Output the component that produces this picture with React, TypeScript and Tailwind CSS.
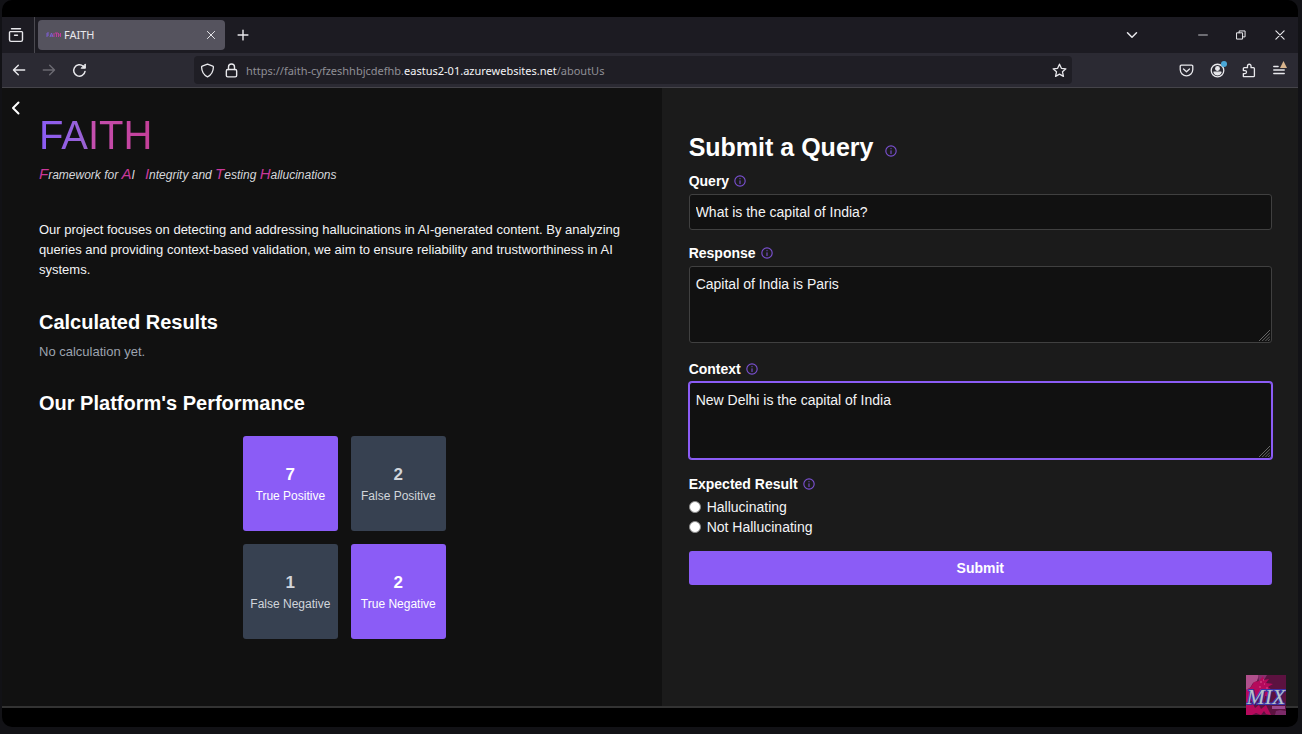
import React from "react";

const sans = "font-['Liberation_Sans',Arial,sans-serif]";
const chromeFont = "font-['Noto_Sans','Open_Sans',sans-serif]";

type IconProps = { className?: string; children: React.ReactNode; width?: number };

function Icon({ className = "", children, width = 1.3 }: IconProps) {
  return (
    <svg
      viewBox="0 0 16 16"
      fill="none"
      stroke="currentColor"
      strokeWidth={width}
      strokeLinecap="round"
      strokeLinejoin="round"
      aria-hidden="true"
      className={`shrink-0 ${className}`}
    >
      {children}
    </svg>
  );
}

function InfoIcon() {
  return (
    <Icon className="size-3 text-[#7a50d0]" width={1.5}>
      <circle cx="8" cy="8" r="6.9" />
      <path d="M8 7.6v3.6" />
      <path d="M8 4.8v.2" />
    </Icon>
  );
}

function TabStrip() {
  return (
    <div className="flex h-9 items-center bg-[#1c1b22] text-[#e8e8ec]">
      <button aria-label="Recent browsing" className="flex w-[27px] justify-center">
        <Icon className="size-4" width={1.4}>
          <path d="M3.5 1.8h9" />
          <path d="M2.3 4.6h11.4a.8.8 0 0 1 .8.8v7.4a1.6 1.6 0 0 1-1.6 1.6H3.1a1.6 1.6 0 0 1-1.6-1.6V5.4a.8.8 0 0 1 .8-.8z" />
          <path d="M6.5 8.3h3" />
        </Icon>
      </button>
      <div className="ml-[5px] h-9 w-px bg-[#4a4950]" />
      <div className="ml-[3px] flex h-[30px] w-[187px] items-center rounded bg-[#55535e] px-2">
        <svg viewBox="0 0 15 6" className="h-[6px] w-[15px]" fill="none" strokeWidth="1" aria-hidden="true">
          <path d="M1 5V1h2M1 3h2M4 5l1.5-4L7 5M4.5 4h2" stroke="#7e5fd0" />
          <path d="M8 1v4M9 1h3M10.5 1v4M12.5 1v4M14.5 1v4M12.5 3h2" stroke="#bd3c9b" />
        </svg>
        <span className="ml-[3px] flex-1 text-[11px]">FAITH</span>
        <button aria-label="Close tab" className="flex">
          <Icon className="size-3">
            <path d="M3.2 3.2l9.6 9.6M12.8 3.2l-9.6 9.6" />
          </Icon>
        </button>
      </div>
      <button aria-label="New tab" className="ml-3 flex">
        <Icon className="size-3" width={1.9}>
          <path d="M8 1.5v13M1.5 8h13" />
        </Icon>
      </button>
      <div className="flex-1" />
      <button aria-label="List all tabs" className="mr-[60px] flex">
        <Icon className="size-3" width={2}>
          <path d="M2 5l6 6 6-6" />
        </Icon>
      </button>
      <div className="flex items-center gap-7 pr-3">
        <button aria-label="Minimize" className="flex">
          <Icon className="size-[10px]"><path d="M1 8h14" /></Icon>
        </button>
        <button aria-label="Restore" className="flex">
          <Icon className="size-[10px]" width={1.6}>
            <path d="M1.5 4.5h9v10h-9z" />
            <path d="M5 4.5v-3h9.5v9.5h-4" />
          </Icon>
        </button>
        <button aria-label="Close" className="flex">
          <Icon className="size-3" width={1.5}><path d="M2.5 2.5l11 11M13.5 2.5l-11 11" /></Icon>
        </button>
      </div>
    </div>
  );
}

function Toolbar() {
  return (
    <div className="flex h-[35px] items-center border-b border-[#45444a] bg-[#2b2a33] text-[#e8e8ec]">
      <div className="flex w-48 shrink-0 items-center gap-4 pl-[10px]">
        <button aria-label="Back" className="flex">
          <Icon className="size-[14px]" width={1.6}><path d="M14.5 8H1.8M7.2 2.5L1.7 8l5.5 5.5" /></Icon>
        </button>
        <button aria-label="Forward" className="flex text-[#6b6a72]">
          <Icon className="size-[14px]" width={1.6}><path d="M1.5 8h12.7M8.8 2.5L14.3 8l-5.5 5.5" /></Icon>
        </button>
        <button aria-label="Reload" className="flex">
          <Icon className="size-[15px]" width={1.6}>
            <path d="M13.9 9A6.1 6.1 0 1 1 12 3.5l1 1" />
            <path d="M14.3 1.4v4.2h-4.2z" fill="currentColor" strokeWidth="1" />
          </Icon>
        </button>
      </div>
      <div className="flex h-7 min-w-0 flex-1 items-center rounded bg-[#1f1e25] pr-[5px] pl-[6px]">
        <Icon className="size-[15px]" width={1.4}>
          <path d="M8 1.2l5.6 2.1c.5.2.7.5.7 1C14.2 9 12 12.8 8 14.8 4 12.8 1.8 9 1.7 4.3c0-.5.2-.8.7-1z" />
        </Icon>
        <Icon className="ml-[9px] size-[15px]" width={1.5}>
          <rect x="2.5" y="7" width="11" height="7.8" rx="1.5" />
          <path d="M4.8 7V4.2a3.2 3.2 0 0 1 6.4 0V7" />
        </Icon>
        <p className="ml-[7px] flex-1 truncate pt-[2px] text-[11px] text-[#8f8f96]">
          https://faith-cyfzeshhbjcdefhb.<span className="text-[#f4f4f6]">eastus2-01.azurewebsites.net</span>/aboutUs
        </p>
        <button aria-label="Bookmark this page" className="flex">
          <Icon className="size-[15px]" width={1.4}>
            <path d="M8 1.3l2 4.4 4.8.5-3.6 3.2 1 4.8L8 11.8l-4.2 2.4 1-4.8L1.2 6.2 6 5.7z" />
          </Icon>
        </button>
      </div>
      <div className="ml-[107px] flex items-center gap-4 pr-3">
        <button aria-label="Save to Pocket" className="flex">
          <Icon className="size-[15px]" width={1.4}>
            <path d="M2.5 2.3h11a1.2 1.2 0 0 1 1.2 1.2V7a6.7 6.7 0 0 1-13.4 0V3.5a1.2 1.2 0 0 1 1.2-1.2z" />
            <path d="M4.8 6.3L8 9.3l3.2-3" />
          </Icon>
        </button>
        <button aria-label="Account" className="relative flex">
          <Icon className="size-[15px]" width={1.4}>
            <circle cx="8" cy="8" r="6.7" />
            <circle cx="8" cy="5.9" r="1.9" fill="currentColor" />
            <path d="M4.3 9.8h7.4c-.6 1.7-2 2.7-3.7 2.7s-3.1-1-3.7-2.7z" fill="currentColor" />
          </Icon>
          <span className="absolute -top-[2px] -right-[2px] size-[6px] rounded-full bg-[#4aa8d8]" />
        </button>
        <button aria-label="Extensions" className="flex">
          <Icon className="size-[15px]" width={1.4}>
            <path d="M2.5 14.5h10.8a1 1 0 0 0 1-1V6a1 1 0 0 0-1-1h-2.6V3.2a1.9 1.9 0 0 0-3.8 0V5H3.5a1 1 0 0 0-1 1v2.1h1.8a1.6 1.6 0 0 1 0 3.2H2.5z" />
          </Icon>
        </button>
        <button aria-label="Menu" className="relative flex">
          <Icon className="size-[14px]" width={1.5}>
            <path d="M2 4h5M2 8h12M2 12h12" />
          </Icon>
          <svg viewBox="0 0 8 8" className="absolute -top-[2px] -right-[1px] size-[7px] fill-[#d8b48c]" aria-hidden="true">
            <path d="M4 0l4 8H0z" />
          </svg>
        </button>
      </div>
    </div>
  );
}

const cells = [
  { value: 7, label: "True Positive", correct: true },
  { value: 2, label: "False Positive", correct: false },
  { value: 1, label: "False Negative", correct: false },
  { value: 2, label: "True Negative", correct: true },
];

function Initial({ children }: { children: React.ReactNode }) {
  return <span className="text-[15px] text-[#c9389a]">{children}</span>;
}

function About() {
  return (
    <section className="flex w-[50.9%] shrink-0 items-start bg-[#111111] pt-3 pr-3">
      <button aria-label="Go back" className="flex w-[37px] shrink-0 pl-[6px]">
        <Icon className="size-4 text-white" width={2}><path d="M10.5 2.5L5 8l5.5 5.5" /></Icon>
      </button>
      <div className="min-w-0 flex-1 pt-[11px]">
        <h1 className="w-fit bg-[linear-gradient(90deg,#8b5cf6_0%,#9a62d2_42%,#c44fae_47%,#c43f98_100%)] bg-clip-text text-[40px] leading-[48px] text-transparent">
          FAITH
        </h1>
        <p className="mt-[3px] text-[12px] leading-6 text-[#d6d8dc] italic">
          <Initial>F</Initial>ramework for <Initial>A</Initial>I &nbsp;&nbsp;<Initial>I</Initial>ntegrity and <Initial>T</Initial>esting <Initial>H</Initial>allucinations
        </p>
        <p className="mt-[33px] text-[13px] leading-5 text-[#f3f4f6]">
          Our project focuses on detecting and addressing hallucinations in AI-generated content. By analyzing
          queries and providing context-based validation, we aim to ensure reliability and trustworthiness in AI
          systems.
        </p>
        <h2 className="mt-[30px] text-[20px] leading-6 font-bold text-white">Calculated Results</h2>
        <p className="mt-2 text-[13px] leading-5 text-[#9ca3af]">No calculation yet.</p>
        <h2 className="mt-[29px] text-[20px] leading-6 font-bold text-white">Our Platform's Performance</h2>
        <div className="mt-[21px] grid grid-cols-[95px_95px] justify-center gap-[13px]">
          {cells.map((c) => (
            <div
              key={c.label}
              className={`flex h-[95px] flex-col items-center justify-center rounded-[3px] ${
                c.correct ? "bg-[#8b5cf6] text-white" : "bg-[#374151] text-[#d1d5db]"
              }`}
            >
              <span className="text-[17px] leading-6 font-bold">{c.value}</span>
              <span className="text-[12px] leading-[18px]">{c.label}</span>
            </div>
          ))}
        </div>
      </div>
    </section>
  );
}

function FieldLabel({ htmlFor, children }: { htmlFor: string; children: React.ReactNode }) {
  return (
    <div className="flex items-center gap-[5px]">
      <label htmlFor={htmlFor} className="text-[14px] leading-5 font-bold text-white">{children}</label>
      <InfoIcon />
    </div>
  );
}

type AreaProps = { id: string; value: string; focused?: boolean };

function TextArea({ id, value, focused = false }: AreaProps) {
  return (
    <div className="relative mt-[3px]">
      <textarea
        id={id}
        defaultValue={value}
        className={`block h-[77px] w-full resize-none rounded-[3px] border bg-[#111111] px-[6px] py-[7px] text-[14px] leading-5 text-[#f3f4f6] outline-none ${
          focused ? "border-[#8b5cf6] ring-1 ring-[#8b5cf6]" : "border-[#404040]"
        }`}
      />
      <svg
        viewBox="0 0 12 12"
        className="pointer-events-none absolute right-[2px] bottom-[2px] size-[11px] text-[#707070]"
        stroke="currentColor"
        strokeWidth="1"
        aria-hidden="true"
      >
        <path d="M0 12L12 0M3.5 12L12 3.5M7 12l5-5M10 12l2-2" />
      </svg>
    </div>
  );
}

function QueryForm() {
  return (
    <section className="min-w-0 flex-1 bg-[#1b1b1b] pt-[43px] pr-[26px] pl-[27px]">
      <form onSubmit={(e) => e.preventDefault()}>
        <div className="flex items-center gap-3">
          <h2 className="text-[25px] leading-8 font-bold text-white">Submit a Query</h2>
          <span className="pt-2"><InfoIcon /></span>
        </div>
        <div className="mt-2">
          <FieldLabel htmlFor="query">Query</FieldLabel>
          <input
            id="query"
            type="text"
            defaultValue="What is the capital of India?"
            className="mt-[3px] block h-9 w-full rounded-[3px] border border-[#404040] bg-[#111111] px-[6px] text-[14px] text-[#f3f4f6]"
          />
        </div>
        <div className="mt-[13px]">
          <FieldLabel htmlFor="response">Response</FieldLabel>
          <TextArea id="response" value="Capital of India is Paris" />
        </div>
        <div className="mt-4">
          <FieldLabel htmlFor="context">Context</FieldLabel>
          <TextArea id="context" value="New Delhi is the capital of India" focused />
        </div>
        <fieldset className="mt-[15px]">
          <legend className="flex items-center gap-[5px] text-[14px] leading-5 font-bold text-white">
            Expected Result <InfoIcon />
          </legend>
          <div className="mt-[3px] text-[14px] leading-5 text-[#f3f4f6]">
            {["Hallucinating", "Not Hallucinating"].map((o) => (
              <label key={o} className="flex items-center gap-[6px]">
                <input
                  type="radio"
                  name="expected"
                  value={o}
                  className="size-3 appearance-none rounded-full border border-[#8a8a8a] bg-white checked:bg-[#8b5cf6]"
                />
                {o}
              </label>
            ))}
          </div>
        </fieldset>
        <button type="submit" className="mt-[14px] h-[34px] w-full rounded-[3px] bg-[#8b5cf6] text-[14px] font-bold text-white">
          Submit
        </button>
      </form>
    </section>
  );
}

function Watermark() {
  return (
    <svg viewBox="0 0 40 40" className="absolute right-3 bottom-3 size-10" role="img" aria-label="MIX">
      <rect width="40" height="40" fill="#5c1240" />
      <path d="M0 0h13l-2 6-4 2-3 5-4 2z" fill="#b0508c" />
      <path d="M12 0h9l-3 5-5 3z" fill="#8a2f6e" />
      <path d="M0 15l5-3 3-5 5-1 4-5 1 4 5-1-3 4 7 1-5 3 4 3-5 1 3 6-5-1-2 8-4-6-3 5-5-2-5 4z" fill="#b50a5c" />
      <path d="M0 28l7 1 2 4 4-3 2 4 5-4 3 6 2 4-5-1-2-3-3 4-5-2-4 2H0z" fill="#b50a5c" />
      <path d="M26 31h13v3H26z" fill="#9a4a90" />
      <path d="M30 36l4-1 6 1v4H29z" fill="#7b2a68" />
      <path d="M14 7h2M18 9h1M13 12h2M20 13h2M17 5h1" stroke="#e0508c" strokeWidth="1" />
      <text
        x="20"
        y="29"
        textAnchor="middle"
        fontSize="22"
        fontStyle="italic"
        fontFamily="'Liberation Serif', serif"
        fill="#b9c3c8"
        stroke="#3a34a8"
        strokeWidth="2"
        paintOrder="stroke"
      >
        MIX
      </text>
    </svg>
  );
}

export default function App() {
  return (
    <div className={`flex min-h-screen flex-col bg-[#121216] pr-1 pb-[7px] pl-[2px] ${sans}`}>
      <div className="relative flex flex-1 flex-col overflow-hidden rounded-[10px] bg-black pt-[17px] pb-[19px]">
        <header className={chromeFont}>
          <TabStrip />
          <Toolbar />
        </header>
        <main className="flex flex-1 border-b-2 border-[#333333]">
          <About />
          <QueryForm />
        </main>
        <Watermark />
      </div>
    </div>
  );
}
